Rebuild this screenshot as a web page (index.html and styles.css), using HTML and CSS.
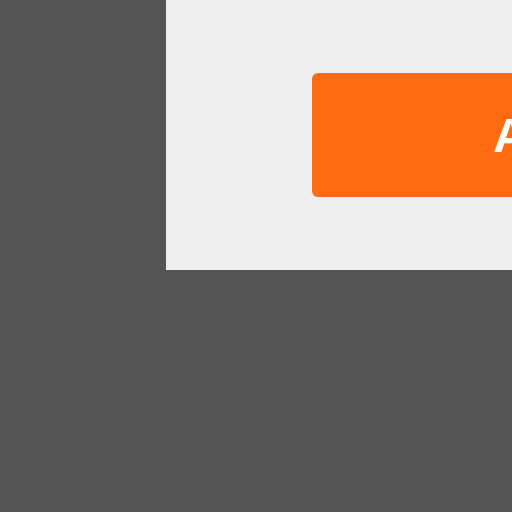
FILE: index.html
```html
<!DOCTYPE html>
<html>
<head>
<meta charset="utf-8">
<link rel="stylesheet" href="styles.css">
</head>
<body>
<div class="stage">
  <div class="panel">
    <button class="cta">Add to cart</button>
  </div>
</div>
</body>
</html>
```
FILE: styles.css
```css
html, body {
  margin: 0;
  padding: 0;
  width: 512px;
  height: 512px;
  overflow: hidden;
  background: #555555;
}
.stage {
  display: flex;
  padding-left: 166px;
}
.panel {
  width: 346px;
  height: 270px;
  background: #eeeeee;
  overflow: hidden;
  padding: 73px 0 0 146px;
  box-sizing: border-box;
}
.cta {
  display: flex;
  align-items: center;
  height: 124px;
  width: 600px;
  padding: 0 0 0 181px;
  border: none;
  border-radius: 6px;
  background: #fe6b13;
  color: #ffffff;
  font-family: "Liberation Sans", Arial, sans-serif;
  font-weight: bold;
  font-size: 49px;
  white-space: nowrap;
  box-sizing: border-box;
}
```
